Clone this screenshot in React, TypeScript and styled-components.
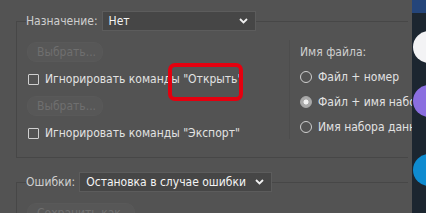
import React from 'react';
import styled, { createGlobalStyle } from 'styled-components';

const GlobalStyle = createGlobalStyle`
  html, body {
    margin: 0;
    padding: 0;
    background: #535353;
  }
  body {
    font-family: "DejaVu Sans Condensed", "DejaVu Sans", sans-serif;
    font-size: 12px;
    color: #d8d8d8;
  }
`;

const Page = styled.div`
  position: relative;
  display: flex;
  width: 426px;
  height: 213px;
  overflow: hidden;
`;

const Main = styled.div`
  flex: 1;
  min-width: 0;
  overflow: hidden;
  padding: 11px 0 0 16px;
`;

const Group = styled.fieldset<{ $gapTop?: number }>`
  margin: ${({ $gapTop }) => $gapTop ?? 0}px 0 0 0;
  padding: 0;
  width: 392px;
  box-sizing: border-box;
  border: 1px solid #474747;
  border-right: none;
  min-width: 0;
`;

const Legend = styled.legend`
  display: flex;
  align-items: center;
  gap: 4px;
  margin-left: 9px;
  padding: 0;
  height: 20px;
`;

const LegendLabel = styled.span`
  color: #cfcfcf;
  white-space: nowrap;
`;

const Select = styled.div<{ $width: number }>`
  display: flex;
  align-items: center;
  justify-content: space-between;
  box-sizing: border-box;
  width: ${({ $width }) => $width}px;
  height: 20px;
  padding: 0 7px 0 6px;
  background: #464646;
  border: 1px solid #5c5c5c;
  color: #f4f4f4;
  white-space: nowrap;
`;

const Body = styled.div`
  display: flex;
  align-items: flex-start;
`;

const LeftCol = styled.div`
  flex: 0 0 272px;
  display: flex;
  flex-direction: column;
  align-items: flex-start;
  gap: 9px;
  padding: 11px 0 16px 10px;
  box-sizing: border-box;
`;

const RightCol = styled.div`
  display: flex;
  flex-direction: column;
  gap: 9px;
  margin-top: 9px;
  padding: 4px 0 4px 10px;
  border-left: 1px solid #4d4d4d;
  white-space: nowrap;
`;

const GhostButton = styled.div<{ $width: number }>`
  box-sizing: border-box;
  width: ${({ $width }) => $width}px;
  height: 20px;
  line-height: 18px;
  padding-left: 9px;
  border-radius: 9px;
  background: #575757;
  border: 1px solid #595959;
  color: #6f6f6f;
  white-space: nowrap;
`;

const Row = styled.div`
  display: flex;
  align-items: center;
  height: 16px;
  white-space: nowrap;
  color: #e2e2e2;
`;

const Checkbox = styled.span`
  box-sizing: border-box;
  width: 11px;
  height: 11px;
  margin: 0 6px 0 1px;
  border: 1px solid #cfcfcf;
  border-radius: 1px;
`;

const Radio = styled.span<{ $checked?: boolean }>`
  box-sizing: border-box;
  width: 12px;
  height: 12px;
  margin-right: 6px;
  border-radius: 50%;
  border: 1.5px solid ${({ $checked }) => ($checked ? '#a9a9a9' : '#cfcfcf')};
  background: ${({ $checked }) =>
    $checked ? 'radial-gradient(circle, #f2f2f2 0 2.2px, #a9a9a9 2.8px)' : 'transparent'};
`;

const Caption = styled.div`
  height: 16px;
  line-height: 16px;
  color: #cfcfcf;
`;

const Highlight = styled.div`
  position: absolute;
  left: 168px;
  top: 63px;
  width: 75px;
  height: 38px;
  box-sizing: border-box;
  border: 4px solid #e4000f;
  border-radius: 7px;
`;

const Side = styled.div`
  flex: 0 0 14px;
  display: flex;
  flex-direction: column;
  background: #1c2630;
  overflow: hidden;
`;

const SideTop = styled.div`
  height: 13px;
  background: #24457a;
  flex-shrink: 0;
`;

const Avatar = styled.div<{ $color: string; $top: number }>`
  flex-shrink: 0;
  width: 32px;
  height: 32px;
  margin: ${({ $top }) => $top}px 0 0 1px;
  border-radius: 50%;
  background: ${({ $color }) => $color};
`;

const Chevron = () => (
  <svg width="9" height="6" viewBox="0 0 9 6">
    <path d="M1 1 L4.5 4.5 L8 1" fill="none" stroke="#f0f0f0" strokeWidth="1.8" />
  </svg>
);

export default function App() {
  return (
    <>
      <GlobalStyle />
      <Page>
        <Main>
          <Group>
            <Legend>
              <LegendLabel>Назначение:</LegendLabel>
              <Select $width={154}>
                Нет
                <Chevron />
              </Select>
            </Legend>
            <Body>
              <LeftCol>
                <GhostButton $width={76}>Выбрать...</GhostButton>
                <Row>
                  <Checkbox />
                  Игнорировать команды "Открыть"
                </Row>
                <GhostButton $width={76}>Выбрать...</GhostButton>
                <Row>
                  <Checkbox />
                  Игнорировать команды "Экспорт"
                </Row>
              </LeftCol>
              <RightCol>
                <Caption>Имя файла:</Caption>
                <Row>
                  <Radio />
                  Файл + номер
                </Row>
                <Row>
                  <Radio $checked />
                  Файл + имя набора данных
                </Row>
                <Row>
                  <Radio />
                  Имя набора данных
                </Row>
              </RightCol>
            </Body>
          </Group>
          <Group $gapTop={14}>
            <Legend>
              <LegendLabel>Ошибки:</LegendLabel>
              <Select $width={193}>
                Остановка в случае ошибки
                <Chevron />
              </Select>
            </Legend>
            <Body>
              <LeftCol>
                <GhostButton $width={108}>Сохранить как...</GhostButton>
              </LeftCol>
            </Body>
          </Group>
        </Main>
        <Side>
          <SideTop />
          <Avatar $color="#f3f3f5" $top={18} />
          <Avatar $color="#8a6ee0" $top={22} />
          <Avatar $color="#0e8bd0" $top={37} />
        </Side>
        <Highlight />
      </Page>
    </>
  );
}
